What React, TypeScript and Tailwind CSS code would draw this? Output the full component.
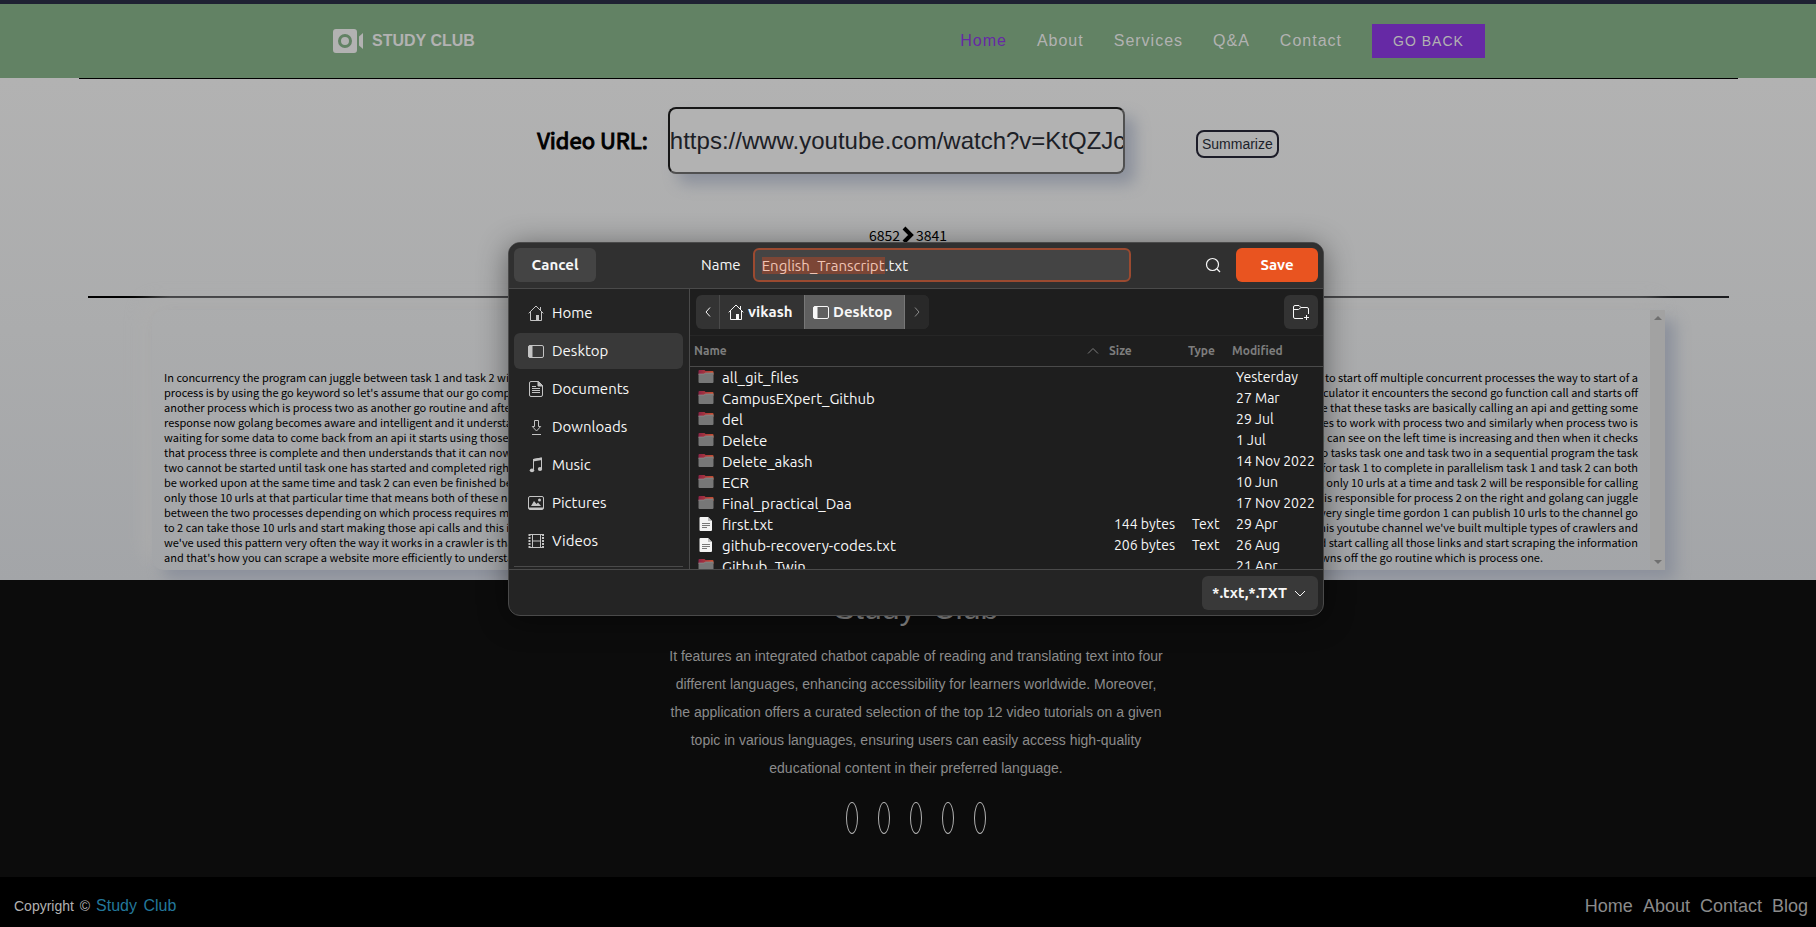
import React, { useEffect, useRef } from 'react'

const navLinks = ['Home', 'About', 'Services', 'Q&A', 'Contact']
const footerLinks = ['Home', 'About', 'Contact', 'Blog']

// each transcript row keeps its opening and its closing words
const transcript = [
  ['In concurrency the program can juggle between task 1 and task 2 with', 'way to start off multiple concurrent processes the way to start of a'],
  ["process is by using the go keyword so let's assume that our go compiler", 'circulator it encounters the second go function call and starts off'],
  ['another process which is process two as another go routine and after', 'assume that these tasks are basically calling an api and getting some'],
  ['response now golang becomes aware and intelligent and it understands', 'switches to work with process two and similarly when process two is'],
  ['waiting for some data to come back from an api it starts using those', 'you can see on the left time is increasing and then when it checks'],
  ['that process three is complete and then understands that it can now', 'two tasks task one and task two in a sequential program the task'],
  ['two cannot be started until task one has started and completed right so', 'waiting for task 1 to complete in parallelism task 1 and task 2 can both'],
  ['be worked upon at the same time and task 2 can even be finished before', 'calling only 10 urls at a time and task 2 will be responsible for calling'],
  ['only those 10 urls at that particular time that means both of these now', 'is responsible for process 2 on the right and golang can juggle'],
  ['between the two processes depending on which process requires more', 'every single time gordon 1 can publish 10 urls to the channel go'],
  ['to 2 can take those 10 urls and start making those api calls and this is', "this youtube channel we've built multiple types of crawlers and"],
  ["we've used this pattern very often the way it works in a crawler is that", 'and start calling all those links and start scraping the information'],
  ["and that's how you can scrape a website more efficiently to understand", 'spawns off the go routine which is process one.'],
]

type FileRow = {
  name: string;
  size?: string;
  type?: string;
  modified: string;
}

const files: FileRow[] = [
  { name: 'all_git_files', modified: 'Yesterday' },
  { name: 'CampusEXpert_Github', modified: '27 Mar' },
  { name: 'del', modified: '29 Jul' },
  { name: 'Delete', modified: '1 Jul' },
  { name: 'Delete_akash', modified: '14 Nov 2022' },
  { name: 'ECR', modified: '10 Jun' },
  { name: 'Final_practical_Daa', modified: '17 Nov 2022' },
  { name: 'first.txt', size: '144 bytes', type: 'Text', modified: '29 Apr' },
  { name: 'github-recovery-codes.txt', size: '206 bytes', type: 'Text', modified: '26 Aug' },
  { name: 'Github_Twin', modified: '21 Apr' },
]

const Icon = ({ children }: { children: React.ReactNode }) => (
  <svg width="16" height="16" viewBox="0 0 16 16" fill="none" stroke="currentColor" className="shrink-0">
    {children}
  </svg>
)

const HomeIcon = () => (
  <Icon>
    <path d="M.7 8.3 8 1l7.3 7.3M2.5 7v8.5h11V7M12.5 2v3" />
    <path d="M8 10h3v5.5H8z" fill="currentColor" stroke="none" />
  </Icon>
)

const DesktopIcon = () => (
  <Icon>
    <rect x=".5" y="2.5" width="15" height="12" rx="1.5" />
    <path d="M1 3h3v11H1z" fill="currentColor" />
  </Icon>
)

const DocumentsIcon = () => (
  <Icon>
    <path d="M3 .5h7.5l4 4V14a1.5 1.5 0 0 1-1.5 1.5H3A1.5 1.5 0 0 1 1.5 14V2A1.5 1.5 0 0 1 3 .5z" />
    <path d="M10 .5v4.5h4.5z" fill="currentColor" />
    <path d="M4 5.5h4M4 7.5h8M4 9.5h8M4 11.5h8" />
  </Icon>
)

const DownloadsIcon = () => (
  <Icon>
    <path d="M6.5 1.5h4v6h2.2L8.5 12 4.3 7.5h2.2zM4 15.5h9" />
  </Icon>
)

const MusicIcon = () => (
  <Icon>
    <path d="M5.5 13V2.5l8-1.5v10.5" />
    <path d="M5 2l9-1.5v2.5L5 4.5z" fill="currentColor" stroke="none" />
    <ellipse cx="4" cy="13.3" rx="2.2" ry="1.9" fill="currentColor" stroke="none" />
    <ellipse cx="12" cy="12" rx="2.2" ry="1.9" fill="currentColor" stroke="none" />
  </Icon>
)

const PicturesIcon = () => (
  <Icon>
    <rect x=".5" y="1.5" width="15" height="13" rx="1.5" />
    <path d="M1 12.5h14v1.5H1z" fill="currentColor" stroke="none" />
    <path d="M3 11l3-5 2.5 3L10 7.5 13 11z" fill="currentColor" stroke="none" />
    <circle cx="11.5" cy="5" r="1.5" fill="currentColor" stroke="none" />
  </Icon>
)

const VideosIcon = () => (
  <Icon>
    <path d="M1 1.5h14M1 14.5h14M4.5 1.5v13M12.5 1.5v13M4.5 8h8" />
    <path d="M1.5 1v14M15 1v14" strokeWidth="2" strokeDasharray="2 1" />
  </Icon>
)

const FolderIcon = () => (
  <svg width="16" height="16" viewBox="0 0 16 16" className="shrink-0">
    <defs>
      <linearGradient id="tab" x1="0" x2="1">
        <stop offset="0" stopColor="#8d2246" />
        <stop offset="1" stopColor="#c8502f" />
      </linearGradient>
    </defs>
    <path d="M.5 3V2a1 1 0 0 1 1-1h5l1 1h7a1 1 0 0 1 1 1v3H.5z" fill="url(#tab)" />
    <path d="M.5 5h5.5l1.5-1h8v9a1 1 0 0 1-1 1h-13a1 1 0 0 1-1-1z" fill="#777" />
    <path d="M.5 5h5.5l1.5-1h8" fill="none" stroke="#949494" strokeWidth=".6" />
  </svg>
)

const TextFileIcon = () => (
  <svg width="16" height="16" viewBox="0 0 16 16" className="shrink-0">
    <path d="M2.5 1H10l4 4v9a1 1 0 0 1-1 1H2.5a1 1 0 0 1-1-1V2a1 1 0 0 1 1-1z" fill="#f4f4f4" />
    <path d="M10 1l4 4h-4z" fill="#bdbdbd" />
    <path d="M4 7.5h8M4 9.5h8M4 11.5h5" stroke="#777" />
  </svg>
)

const Chevron = ({ d }: { d: string }) => (
  <Icon>
    <path d={d} />
  </Icon>
)

const places = [
  { label: 'Home', icon: <HomeIcon /> },
  { label: 'Desktop', icon: <DesktopIcon /> },
  { label: 'Documents', icon: <DocumentsIcon /> },
  { label: 'Downloads', icon: <DownloadsIcon /> },
  { label: 'Music', icon: <MusicIcon /> },
  { label: 'Pictures', icon: <PicturesIcon /> },
  { label: 'Videos', icon: <VideosIcon /> },
]

const Header = () => (
  <header className="border-t-4 border-[#1f2233] bg-[#628264] font-['Liberation_Sans',sans-serif]">
    <div className="mx-auto flex h-[74px] max-w-[1154px] items-center justify-between pb-px">
      <a href="#" className="flex items-center gap-2 font-bold text-[#b2b2b2]">
        <svg width="33" height="26" viewBox="-1 0 33 26" fill="currentColor">
          <path fillRule="evenodd" d="M4 1h18a3 3 0 0 1 3 3v18a3 3 0 0 1-3 3H4a3 3 0 0 1-3-3V4a3 3 0 0 1 3-3zm9 5a7 7 0 1 0 0 14 7 7 0 0 0 0-14zm0 3a4 4 0 1 1 0 8 4 4 0 0 1 0-8z" />
          <path d="M27 8.5 31 5v16l-4-3.5z" />
        </svg>
        STUDY CLUB
      </a>
      <nav className="flex items-center gap-[30px] tracking-[1px] text-[#b2b2b2]">
        {navLinks.map((link) => (
          <a key={link} href="#" className={link === 'Home' ? 'text-[#6629a5]' : ''}>{link}</a>
        ))}
        <button className="h-[34px] w-[113px] bg-[#6629a5] text-sm tracking-[1px]">GO BACK</button>
      </nav>
    </div>
  </header>
)

const Summary = () => (
  <main className="bg-linear-to-b from-[#b2b2b2] via-[#abacad] to-[#a3a5a8] pb-[10px] font-['Noto_Sans_CJK_SC','Noto_Sans',sans-serif] text-black">
    <hr className="mr-[78px] ml-[79px] border-t border-black" />
    <div className="flex items-center justify-center pt-7">
      <label htmlFor="url" className="mr-5 mb-1 text-[22px] leading-7 [-webkit-text-stroke:1px_black]">Video URL:</label>
      <input
        id="url"
        defaultValue="https://www.youtube.com/watch?v=KtQZJcQWmUc"
        className="h-[67px] w-[457px] rounded-lg border-2 border-t-[#161616] border-r-[#505050] border-b-[#505050] border-l-[#161616] bg-[#b2b2b2] font-['Liberation_Sans',sans-serif] text-2xl text-[#1c2026] shadow-[10px_10px_15px_#8c919c]"
      />
      <button className="mt-[6px] ml-[71px] h-7 w-[83px] rounded-lg border-2 border-[#1c1c28] font-['Liberation_Sans',sans-serif] text-sm text-[#1c1f2a]">Summarize</button>
    </div>
    <p className="mt-[49px] flex items-center justify-center gap-px text-sm leading-6">
      6852
      <svg width="14" height="20" viewBox="0 0 14 20" fill="none" stroke="currentColor" strokeWidth="4">
        <path d="M3 3l7 7-7 7" />
      </svg>
      3841
    </p>
    <div className="mr-[87px] ml-[88px] mt-[49px] h-[2px] bg-linear-to-r from-black from-3% via-[#1b1c1f] via-5% to-[#1b1c1f] to-95%" />
    <section className="mt-3 mr-[151px] ml-[152px] flex h-[260px] rounded-l-xl shadow-[10px_10px_15px_#8c919c,-8px_-8px_20px_#adadad]">
      <div className="flex-1 px-3 pt-[60px] text-[11px] leading-[15px] text-black">
        {transcript.map(([start, end], i) => (
          <p key={i} className="flex justify-between whitespace-nowrap">
            <span>{start}</span>
            <span className={i === 12 ? 'mr-[95px]' : ''}>{end}</span>
          </p>
        ))}
      </div>
      <div className="flex w-[15px] flex-col items-center justify-between bg-[#a2a2a2] py-[6px] text-[#6f6f6f]">
        <svg width="8" height="4" viewBox="0 0 8 4" fill="currentColor"><path d="M0 4l4-4 4 4z" /></svg>
        <svg width="8" height="4" viewBox="0 0 8 4" fill="currentColor"><path d="M0 0l4 4 4-4z" /></svg>
      </div>
    </section>
  </main>
)

const Footer = () => (
  <footer className="font-['Liberation_Sans',sans-serif]">
    <div className="flex flex-col items-center bg-[#0c0c0c] pt-2 pb-[43px] pl-4 text-center text-[#8b8b8b]">
      <h2 className="text-[32px] leading-[40px]">Study <span className="ml-2">Club</span></h2>
      <p className="mt-[14px] max-w-[500px] text-sm leading-7">
        It features an integrated chatbot capable of reading and translating text into four different languages,
        enhancing accessibility for learners worldwide. Moreover, the application offers a curated selection of
        the top 12 video tutorials on a given topic in various languages, ensuring users can easily access
        high-quality educational content in their preferred language.
      </p>
      <div className="mt-5 flex gap-5">
        {[1, 2, 3, 4, 5].map((n) => (
          <a key={n} href="#" className="h-8 w-3 rounded-[50%] border border-[#b2b2b2]" />
        ))}
      </div>
    </div>
    <div className="flex h-[50px] items-center justify-between bg-black pt-2 pr-2 pl-[14px]">
      <p className="text-sm text-[#b2b2b2]">
        Copyright <span className="mx-[2px]">©</span> <a href="#" className="text-base text-[#23789b]">Study <span className="ml-[2px]">Club</span></a>
      </p>
      <nav className="flex gap-[10px] text-lg text-[#8b8b8b]">
        {footerLinks.map((link) => <a key={link} href="#">{link}</a>)}
      </nav>
    </div>
  </footer>
)

const SaveDialog = () => {
  const nameRef = useRef<HTMLInputElement>(null)

  // select the base name and leave the extension out
  useEffect(() => {
    nameRef.current?.focus()
    nameRef.current?.setSelectionRange(0, 18)
  }, [])

  return (
    <div role="dialog" className="w-[816px] overflow-hidden rounded-xl border border-[#4a4a4a] bg-[#242424] font-['Ubuntu','Noto_Sans',sans-serif] text-[15px] text-[#f7f7f7] shadow-[0_4px_30px_rgba(0,0,0,0.45)]">
      <div className="flex h-[46px] items-center border-b border-[#4a4a4a] bg-[#303030] px-[5px] pb-px">
        <button className="h-[34px] w-[82px] rounded-md bg-[#444] font-bold">Cancel</button>
        <label htmlFor="name" className="mr-3 ml-[105px]">Name</label>
        <input
          id="name"
          ref={nameRef}
          defaultValue="English_Transcript.txt"
          className="h-[34px] w-[378px] rounded-md border-2 border-[#9b4a30] bg-[#444] px-[7px] outline-none selection:bg-[#7c4636] selection:text-[#f0c4b4]"
        />
        <button aria-label="Search" className="mr-[15px] ml-auto">
          <Icon>
            <circle cx="7.5" cy="7.5" r="6" strokeWidth="1.2" />
            <path d="M12 12l3 3" strokeWidth="1.2" />
          </Icon>
        </button>
        <button className="h-[34px] w-[82px] rounded-md bg-[#e95420] font-bold text-white">Save</button>
      </div>

      <div className="flex h-[281px] border-b border-[#4a4a4a]">
        <aside className="flex w-[181px] flex-col gap-[2px] border-r border-[#4a4a4a] pt-[6px] pr-[6px] pl-[5px]">
          {places.map(({ label, icon }) => (
            <button
              key={label}
              className={`flex h-9 shrink-0 items-center gap-2 rounded-md px-[14px] text-left ${label === 'Desktop' ? 'bg-[#393939]' : ''}`}
            >
              <span className="text-[#c4c4c4]">{icon}</span>
              {label}
            </button>
          ))}
          <div className="mt-[5px] border-t border-[#4a4a4a]" />
        </aside>

        <div className="flex min-w-0 flex-1 flex-col overflow-hidden bg-[#1e1e1e]">
          <div className="flex h-[47px] shrink-0 items-center justify-between border-b border-[#262626] pr-[5px] pl-[6px]">
            <div className="flex h-[34px] overflow-hidden rounded-md bg-[#333] font-bold">
              <button aria-label="Back" className="flex w-6 items-center justify-center border-r border-[#4a4a4a]">
                <Chevron d="M10 3.5 6 8l4 4.5" />
              </button>
              <button className="flex w-[84px] items-center gap-1 pl-2"><HomeIcon />vikash</button>
              <button className="flex w-[101px] items-center gap-1 border-x border-[#777] bg-[#5f5f5f] pl-2"><DesktopIcon />Desktop</button>
              <button aria-label="Forward" className="flex w-6 items-center justify-center bg-[#292929] text-[#8a8a8a]">
                <Chevron d="M6 3.5l4 4.5-4 4.5" />
              </button>
            </div>
            <button aria-label="Create folder" className="flex size-[34px] items-center justify-center rounded-md bg-[#333]">
              <Icon>
                <path d="M10 14.5H2A1.5 1.5 0 0 1 .5 13V3A1.5 1.5 0 0 1 2 1.5h4L8 3.5h6A1.5 1.5 0 0 1 15.5 5v5M.5 5.5h5L8 3.5M13.5 11v5M11 13.5h5" />
              </Icon>
            </button>
          </div>
          <table className="w-full table-fixed text-left">
            <thead>
              <tr className="h-[30px] border-b border-[#4a4a4a] text-xs text-[#7d7d7d]">
                <th className="p-0 pl-1">
                  <span className="flex items-center justify-between pr-[10px]">
                    Name
                    <svg width="12" height="8" viewBox="0 0 12 8" fill="none" stroke="currentColor"><path d="M1 6.5l5-5 5 5" /></svg>
                  </span>
                </th>
                <th className="w-[79px] p-0">Size</th>
                <th className="w-[44px] p-0">Type</th>
                <th className="w-[91px] p-0">Modified</th>
              </tr>
            </thead>
            <tbody>
              {files.map((file) => (
                <tr key={file.name} className="h-[21px] text-sm leading-[21px] whitespace-nowrap">
                  <td className="p-0 pl-2">
                    <span className="flex items-center gap-2 text-[15px] leading-[21px]">
                      {file.type ? <TextFileIcon /> : <FolderIcon />}
                      {file.name}
                    </span>
                  </td>
                  <td className="p-0 pr-[13px] text-right">{file.size}</td>
                  <td className="p-0 pl-1">{file.type}</td>
                  <td className="p-0 pl-1">{file.modified}</td>
                </tr>
              ))}
            </tbody>
          </table>
        </div>
      </div>

      <div className="flex h-[45px] items-center justify-end pt-px pr-[5px]">
        <div className="relative">
          <select aria-label="File type" className="h-[34px] w-[116px] appearance-none rounded-md bg-[#393939] pl-[10px] font-bold">
            <option>*.txt,*.TXT</option>
          </select>
          <span className="pointer-events-none absolute top-[9px] right-[10px]">
            <Chevron d="M3 6l5 5 5-5" />
          </span>
        </div>
      </div>
    </div>
  )
}

export default function App() {
  return (
    <div className="relative">
      <Header />
      <Summary />
      <Footer />
      <div className="absolute inset-x-0 top-[242px] flex justify-center pl-4">
        <SaveDialog />
      </div>
    </div>
  )
}
